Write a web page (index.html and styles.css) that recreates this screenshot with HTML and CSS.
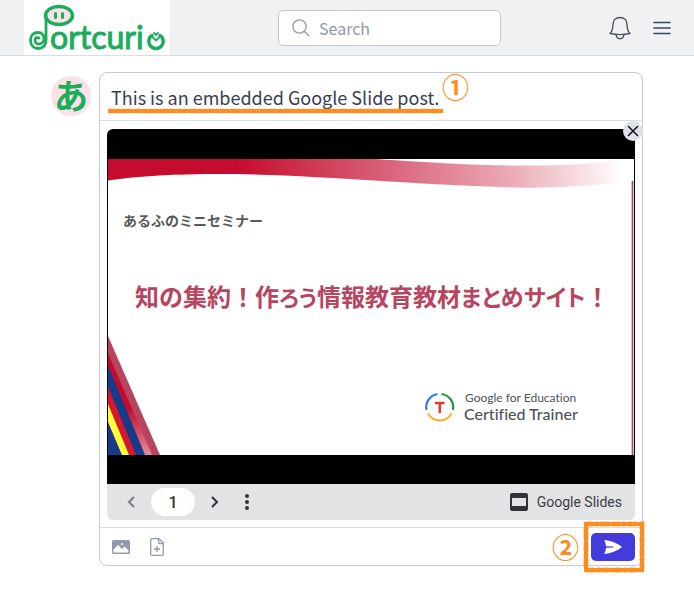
FILE: index.html
```
<!DOCTYPE html>
<html lang="en">
<head>
    <meta charset="UTF-8">
    <meta name="viewport" content="width=device-width, initial-scale=1.0">
    <title>Portcurio</title>
    <link rel="stylesheet" href="styles.css">
</head>
<body>
    <header class="topbar">
        <a href="#" class="logo" aria-label="Portcurio">
            <svg width="146" height="55" viewBox="0 0 146 55">
                <g fill="none" stroke="#1aad5c" stroke-width="3.400" stroke-linecap="round">
                    <ellipse cx="35" cy="15.500" rx="13.500" ry="9" fill="#fde0e8"/>
                    <path d="M22 15v25c0 5.500-3 8.500-8 8.500-4.500 0-7.500-3.500-7.500-8.500 0-4.500 3-7.500 7.500-7.500 4 0 6 3 6 6s-2 5.500-5 5.500-4-2-4-4 2-3 4-2" stroke-width="2.800"/>
                    <path d="M31.500 13.500v4M38.500 13.500v4" stroke-width="3"/>
                    <path d="M128 35.500c-4 2-4.500 9 0 11.800 2.500 1.600 5.500 1.600 8 0 4.500-2.800 4-9.800 0-11.800"/>
                    <path d="M127.500 36l4.500 4.500 4.500-4.500M130 33l2 2 2-2" stroke-width="1.800"/>
                </g>
                <text x="26" y="49" class="logo-text">ortcuri</text>
            </svg>
        </a>
        <form class="search">
            <svg width="18" height="18" viewBox="0 0 18 18" fill="none" stroke="#9299a8" stroke-width="1.300" stroke-linecap="round">
                <circle cx="7.500" cy="7.500" r="6.600"/>
                <path d="M12.300 12.300l4.500 4.500"/>
            </svg>
            <input type="search" placeholder="Search" aria-label="Search">
        </form>
        <nav class="tools">
            <button type="button" aria-label="Notifications">
                <svg width="22" height="24" viewBox="0 0 22 24" fill="none" stroke="#4b5567" stroke-width="1.400" stroke-linejoin="round">
                    <path d="M11 1.500c-4.500 0-7 3-7 7 0 5-1 7-3 9 6 1.300 14 1.300 20 0-2-2-3-4-3-9 0-4-2.500-7-7-7z"/>
                    <path d="M7.200 18.800c.3 5.300 7.300 5.300 7.600 0"/>
                </svg>
            </button>
            <button type="button" aria-label="Menu">
                <svg width="18" height="14" viewBox="0 0 18 14" stroke="#3b4559" stroke-width="1.600" stroke-linecap="round">
                    <path d="M1 1.500h16M1 7h16M1 12.500h16"/>
                </svg>
            </button>
        </nav>
    </header>

    <main class="feed">
        <div class="avatar" lang="ja">あ</div>
        <form class="post">
            <div class="post-title">
                <input type="text" aria-label="Post title" value="This is an embedded Google Slide post.">
                <svg class="underline" width="338" height="8" viewBox="0 0 338 8" stroke="#ff8c1e">
                    <path d="M1 4h335" stroke-width="4"/>
                    <path d="M1 4h335" stroke-width="5" stroke-dasharray="7 2 3 3 5 1 2 4" opacity="0.400"/>
                </svg>
                <span class="step step-one">①</span>
            </div>

            <div class="embed">
                <button type="button" class="close" aria-label="Remove slide">
                    <svg width="12" height="12" viewBox="0 0 12 12" stroke="#17181c" stroke-width="1.600" stroke-linecap="round">
                        <path d="M1.500 1.500l9 9M10.500 1.500l-9 9"/>
                    </svg>
                </button>
                <div class="stage">
                    <svg class="slide" viewBox="0 0 526 296" lang="ja">
                        <defs>
                            <linearGradient id="wave" gradientUnits="userSpaceOnUse" x1="130" y1="20" x2="515" y2="0">
                                <stop offset="0" stop-color="#c60c2e"/>
                                <stop offset="0.350" stop-color="#d75a72"/>
                                <stop offset="0.700" stop-color="#eba8b5"/>
                                <stop offset="1" stop-color="#fff"/>
                            </linearGradient>
                            <linearGradient id="band" x1="0" y1="0" x2="0" y2="1">
                                <stop offset="0.550" stop-color="#c60c2e"/>
                                <stop offset="1" stop-color="#e58c9b"/>
                            </linearGradient>
                        </defs>
                        <rect width="526" height="296" fill="#fff"/>
                        <path d="M0 0H268C330 4 370 6.500 415 6.500C455 6.500 490 5 515 0L524 22C490 26 455 29 415 28.700C320 27 200 15 109 15C70 15 30 17 0 21.500z" fill="url(#wave)"/>
                        <rect x="523" y="22" width="3" height="274" fill="#e3bcc6"/>
                        <rect x="524" y="22" width="1" height="274" fill="#b04560"/>
                        <path d="M0 177L52 296H0z" fill="#b8455f"/>
                        <path d="M0 194L44 296H0z" fill="url(#band)"/>
                        <path d="M0 206L37 296H0z" fill="#173a8a"/>
                        <path d="M0 228L28 296H0z" fill="#d7182a"/>
                        <path d="M0 245L21 296H0z" fill="#ffff3a"/>
                        <path d="M0 263L14 296H0z" fill="#173a8a"/>
                        <text x="15" y="67" class="slide-sub">あるふのミニセミナー</text>
                        <text x="27" y="147" class="slide-title">知の集約！作<tspan class="kana">ろう</tspan>情報教育教材<tspan class="kana kana-wide">まとめサイト</tspan>！</text>
                        <g fill="none" stroke-width="2.200">
                            <path d="M318.500 251A13.500 13.500 0 0 1 329.500 235" stroke="#3478e8"/>
                            <path d="M333.500 235A13.500 13.500 0 0 1 345 251" stroke="#1e9648"/>
                            <path d="M320 254.500A13.500 13.500 0 0 0 343.500 254.500" stroke="#f9b32f"/>
                            <path d="M327 244h9.500M331.750 244v10" stroke="#e03a32" stroke-width="2.500"/>
                        </g>
                        <text x="357" y="243" class="google-small">Google for Education</text>
                        <text x="356" y="261" class="google-large">Certified Trainer</text>
                    </svg>
                </div>
                <div class="player">
                    <button type="button" aria-label="Previous slide">
                        <svg width="10" height="12" viewBox="0 0 10 12" fill="none" stroke="#7a7d82" stroke-width="2"><path d="M8 1L3 6l5 5"/></svg>
                    </button>
                    <button type="button" class="page">1</button>
                    <button type="button" aria-label="Next slide">
                        <svg width="10" height="12" viewBox="0 0 10 12" fill="none" stroke="#303236" stroke-width="2"><path d="M2 1l5 5-5 5"/></svg>
                    </button>
                    <button type="button" aria-label="More options">
                        <svg width="4" height="16" viewBox="0 0 4 16" fill="#303236"><circle cx="2" cy="2" r="2"/><circle cx="2" cy="8" r="2"/><circle cx="2" cy="14" r="2"/></svg>
                    </button>
                    <a href="#" class="slides-link">
                        <svg width="18" height="18" viewBox="0 0 18 18"><path fill="#303236" fill-rule="evenodd" d="M2 0h14a2 2 0 0 1 2 2v14a2 2 0 0 1-2 2H2a2 2 0 0 1-2-2V2a2 2 0 0 1 2-2zM2 5v8h14V5z"/></svg>
                        Google Slides
                    </a>
                </div>
            </div>

            <div class="actions">
                <button type="button" aria-label="Add image">
                    <svg width="18" height="14" viewBox="0 0 18 14">
                        <rect width="18" height="14" rx="1.500" fill="#929bab"/>
                        <path d="M1.500 12.500V9.500L6 5l4 4 2.500-2.500 4 4v2z" fill="#fff"/>
                        <circle cx="10" cy="4" r="1" fill="#fff"/>
                    </svg>
                </button>
                <button type="button" aria-label="Add file">
                    <svg width="14" height="18" viewBox="0 0 14 18" fill="none" stroke="#929bab" stroke-width="1.300" stroke-linejoin="round">
                        <path d="M2 .7h7L13.300 5v11a1.300 1.300 0 0 1-1.300 1.300H2A1.300 1.300 0 0 1 .7 16V2A1.300 1.300 0 0 1 2 .7z"/>
                        <path d="M8.500 .7v3.500a1.300 1.300 0 0 0 1.300 1.300h3.500M7 8v6M4 11h6"/>
                    </svg>
                </button>
                <span class="step step-two">②</span>
                <div class="send-wrap">
                    <button type="submit" class="send" aria-label="Send">
                        <svg width="18" height="14" viewBox="0 0 18 14" fill="#fff"><path d="M0 0C7 .5 13 3 18 7 13 11 7 13.500 0 14c1.300-2.300 1.800-3.900 2-6.300l7.500-.2v-1L2 6.300C1.800 3.900 1.300 2.300 0 0z"/></svg>
                    </button>
                    <svg class="frame" width="64" height="54" viewBox="0 0 64 54" fill="none" stroke="#ff8c1e">
                        <rect x="4" y="4" width="56" height="46" stroke-width="4"/>
                        <rect x="4" y="4" width="56" height="46" stroke-width="6" stroke-dasharray="7 2 3 3 5 1 2 4" opacity="0.400"/>
                    </svg>
                </div>
            </div>
        </form>
    </main>
</body>
</html>
```

FILE: styles.css
```
* {
    box-sizing: border-box;
}
body {
    margin: 0;
    min-height: 100vh;
    background-color: #fff;
    color: #374151;
    font-family: "Noto Sans CJK JP", "Noto Sans", sans-serif;
}
svg {
    display: block;
    overflow: visible;
}
button {
    display: flex;
    align-items: center;
    justify-content: center;
    padding: 0;
    border: none;
    background: none;
    cursor: pointer;
}
input {
    font-family: inherit;
    border: none;
    outline: none;
    background: none;
    padding: 0;
    min-width: 0;
}
.topbar {
    display: flex;
    align-items: center;
    justify-content: space-between;
    padding: 0 23px 0 24px;
    background-color: #f0f1f3;
    border-bottom: 1px solid #dcdde1;
}
.logo {
    background-color: #fff;
}
.logo-text {
    font-family: Lato, sans-serif;
    font-size: 32px;
    fill: #1aad5c;
    stroke: #1aad5c;
    stroke-width: 1px;
}
.search {
    display: flex;
    align-items: center;
    gap: 9px;
    width: 223px;
    height: 36px;
    padding: 0 13px;
    border: 1px solid #c6c9d2;
    border-radius: 5px;
    background-color: #fff;
}
.search input {
    flex: 1;
    font-size: 16px;
    line-height: 24px;
}
.search input::placeholder {
    color: #9299a8;
}
.search svg {
    flex: none;
}
.tools {
    display: flex;
    align-items: center;
    gap: 22px;
}
.feed {
    display: flex;
    align-items: flex-start;
    gap: 8px;
    max-width: 592px;
    margin: 0 auto;
    padding: 16px 0 24px;
}
.avatar {
    flex: none;
    width: 40px;
    height: 40px;
    margin-top: 4px;
    border-radius: 50%;
    background-color: #fde0e8;
    color: #1aad5c;
    font-size: 34px;
    font-weight: 700;
    line-height: 38px;
    text-align: center;
}
.post {
    flex: 1;
    min-width: 0;
    border: 1px solid #c6c9d2;
    border-radius: 8px;
}
.post-title {
    position: relative;
    display: flex;
    align-items: center;
    height: 48px;
    padding: 0 11px;
    border-bottom: 1px solid #dcdde3;
}
.post-title input {
    flex: 1;
    color: #374151;
    font-size: 18px;
    line-height: 28px;
}
.underline {
    position: absolute;
    left: 7px;
    top: 34px;
}
.step {
    color: #ff8c1e;
    font-size: 27px;
    font-weight: 700;
    line-height: 28px;
}
.step-one {
    position: absolute;
    left: 342px;
    top: 0;
}
.embed {
    position: relative;
    margin: 8px 7px 7px;
}
.close {
    position: absolute;
    top: -8px;
    right: -8px;
    width: 20px;
    height: 20px;
    border-radius: 50%;
    background-color: #e0e1e6;
}
.stage {
    padding: 30px 1px 29px;
    border-radius: 6px 6px 0 0;
    background-color: #000;
}
.slide {
    width: 100%;
}
.slide-sub {
    font-size: 14px;
    font-weight: 700;
    fill: #595959;
}
.slide-title {
    font-size: 24px;
    font-weight: 700;
    fill: #b8455f;
}
.kana {
    font-size: 22px;
    font-feature-settings: "palt";
}
.kana-wide {
    font-size: 23px;
}
.google-small,
.google-large {
    font-family: Lato, sans-serif;
    font-variant-ligatures: none;
    fill: #4f5359;
}
.google-small {
    font-size: 12px;
}
.google-large {
    font-size: 16px;
    font-weight: 500;
}
.player {
    display: flex;
    align-items: center;
    height: 36px;
    padding: 0 13px 0 19px;
    border-radius: 0 0 6px 6px;
    background-color: #e2e3e5;
    font-family: Roboto, sans-serif;
    gap: 15px;
}
.page {
    width: 44px;
    height: 28px;
    border-radius: 14px;
    background-color: #fff;
    color: #303236;
    font-family: inherit;
    font-size: 16px;
    font-weight: 500;
}
.page + button {
    margin-right: 10px;
}
.slides-link {
    display: flex;
    align-items: center;
    gap: 9px;
    margin-left: auto;
    color: #3c4043;
    font-size: 14px;
    text-decoration: none;
}
.actions {
    display: flex;
    align-items: center;
    gap: 20px;
    height: 38px;
    padding: 0 7px 0 12px;
    border-top: 1px solid #dcdde3;
}
.step-two {
    margin-left: auto;
    margin-right: -8px;
}
.send-wrap {
    position: relative;
}
.send {
    width: 44px;
    height: 28px;
    border-radius: 5px;
    background-color: #443bdc;
}
.frame {
    position: absolute;
    left: -9px;
    top: -13px;
    pointer-events: none;
}
```
